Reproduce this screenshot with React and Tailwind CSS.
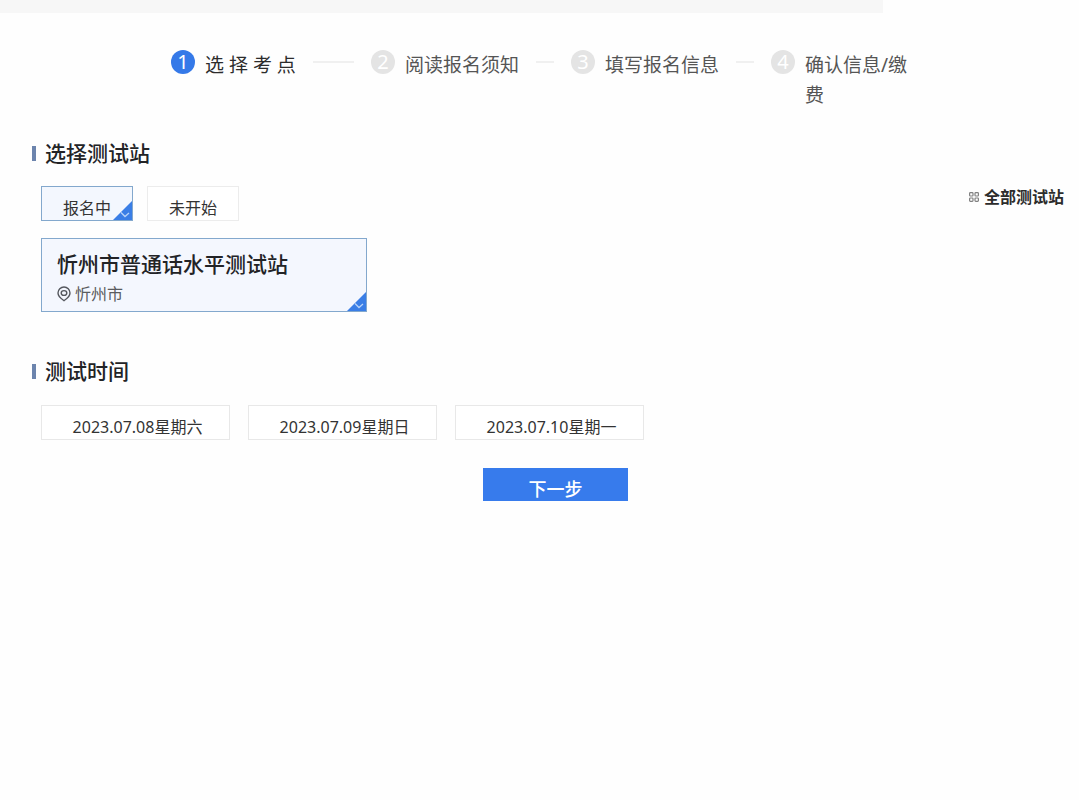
import React, { useState } from "react";

const steps = ["选 择 考 点", "阅读报名须知", "填写报名信息", "确认信息/缴费"];
const tabs = ["报名中", "未开始"];
const stations = [{ id: 1, name: "忻州市普通话水平测试站", city: "忻州市" }];
const dates = ["2023.07.08星期六", "2023.07.09星期日", "2023.07.10星期一"];

// blue triangle with a small tick, bottom right of a selected box
function Corner() {
  return (
    <svg
      className="absolute right-0 bottom-0 w-[19px] h-[19px]"
      viewBox="0 0 19 19"
      fill="none"
      aria-hidden="true"
    >
      <path d="M19 0V19H0Z" fill="#3a7ee6" />
      <path d="M8 11.500l4 4L16 12" stroke="#b9d3f8" strokeWidth="1.3" />
    </svg>
  );
}

function PinIcon() {
  return (
    <svg
      className="w-[14px] h-4 shrink-0"
      viewBox="0 0 14 16"
      fill="none"
      stroke="#55585e"
      strokeWidth="1.4"
      aria-hidden="true"
    >
      <path d="M7 14.6C5.6 13.6 1 11 1 7a6 6 0 0 1 12 0c0 4-4.600 6.600-6 7.600Z" />
      <ellipse cx="7" cy="7" rx="2.8" ry="2.400" />
    </svg>
  );
}

function GridIcon() {
  return (
    <svg
      className="w-[10px] h-[10px] shrink-0"
      viewBox="0 0 10 10"
      fill="none"
      stroke="#808080"
      strokeWidth="1.2"
      aria-hidden="true"
    >
      <rect x="0.6" y="0.6" width="3.4" height="3.4" rx="0.8" />
      <rect x="6" y="0.6" width="3.4" height="3.4" rx="0.8" />
      <rect x="0.6" y="6" width="3.4" height="3.4" rx="0.8" />
      <rect x="6" y="6" width="3.4" height="3.4" rx="0.8" />
    </svg>
  );
}

function Heading({ children }) {
  return (
    <h2 className="flex items-center gap-[9px] text-[21px] leading-[30px] font-medium text-[#222326]">
      <span className="w-1 h-[15px] bg-[#6c84ad]" />
      {children}
    </h2>
  );
}

function App() {
  const [tab, setTab] = useState(0);
  const [station, setStation] = useState(1);
  const [date, setDate] = useState(null);

  return (
    <div className="min-h-screen bg-[#fefefe] font-['Noto_Sans','Noto_Sans_CJK_SC',sans-serif]">
      <div className="w-9/11 h-[13px] bg-[#f7f7f7]" />

      <ol className="flex pt-[37px] pl-[171px]">
        {steps.map((step, i) => (
          <li
            key={step}
            className={
              i < steps.length - 1
                ? "flex items-start w-[200px]"
                : "flex items-start w-[144px]"
            }
          >
            <span
              className={
                i === 0
                  ? "w-6 h-6 shrink-0 rounded-full text-center text-[20px] leading-6 text-white bg-[#3579e8]"
                  : "w-6 h-6 shrink-0 rounded-full text-center text-[20px] leading-6 text-white bg-[#e4e4e4]"
              }
            >
              {i + 1}
            </span>
            <span
              className={
                i === 0
                  ? "ml-[10px] text-[19px] leading-[30px] text-[#2c2c2c]"
                  : "ml-[10px] text-[19px] leading-[30px] text-[#555555]"
              }
            >
              {step}
            </span>
            {i < steps.length - 1 && (
              <span className="flex-1 h-[2px] mt-[11px] mx-[17px] bg-[#f0f0f0]" />
            )}
          </li>
        ))}
      </ol>

      <main className="pt-7 pl-8">
        <Heading>选择测试站</Heading>

        <div className="flex items-start justify-between mt-[18px] pl-[9px] pr-[15px]">
          <div className="flex gap-[14px]">
            {tabs.map((name, i) => (
              <button
                key={name}
                onClick={() => setTab(i)}
                aria-pressed={tab === i}
                className={
                  tab === i
                    ? "relative w-[92px] h-[35px] pt-2 border border-[#83a8cd] bg-[#f3f7fe] text-[16px] leading-6 text-[#333333]"
                    : "relative w-[92px] h-[35px] pt-2 border border-[#ececec] bg-white text-[16px] leading-6 text-[#333333]"
                }
              >
                {name}
                {tab === i && <Corner />}
              </button>
            ))}
          </div>
          <a
            href="#all"
            className="flex items-center gap-[5px] text-[16px] leading-[22px] font-bold text-[#2c2c2c]"
          >
            <GridIcon />
            全部测试站
          </a>
        </div>

        <div className="flex mt-[17px] pl-[9px]">
          {stations.map((s) => (
            <button
              key={s.id}
              onClick={() => setStation(s.id)}
              aria-pressed={station === s.id}
              className="relative w-[326px] h-[74px] pt-2 px-[15px] border border-[#83a8cd] bg-[#f4f7fe] text-left"
            >
              <span className="block text-[21px] leading-[30px] font-medium text-[#222326]">
                {s.name}
              </span>
              <span className="flex items-center gap-1 text-[16px] leading-[30px] text-[#5a5c60]">
                <PinIcon />
                {s.city}
              </span>
              {station === s.id && <Corner />}
            </button>
          ))}
        </div>

        <div className="mt-11">
          <Heading>测试时间</Heading>
        </div>

        <div className="flex flex-wrap gap-[18px] mt-[19px] pl-[9px]">
          {dates.map((d) => (
            <button
              key={d}
              onClick={() => setDate(d)}
              aria-pressed={date === d}
              className={
                date === d
                  ? "relative w-[189px] h-[35px] pt-2 pl-1 border border-[#83a8cd] bg-[#f3f7fe] text-[16px] leading-6 text-[#333333]"
                  : "relative w-[189px] h-[35px] pt-2 pl-1 border border-[#e8e8e8] bg-white text-[16px] leading-6 text-[#333333]"
              }
            >
              {d}
              {date === d && <Corner />}
            </button>
          ))}
        </div>

        <div className="flex justify-center mt-7">
          <button className="w-[145px] h-[33px] pt-2 bg-[#377bec] text-[18px] leading-6 font-medium text-white">
            下一步
          </button>
        </div>
      </main>
    </div>
  );
}

export default App;
